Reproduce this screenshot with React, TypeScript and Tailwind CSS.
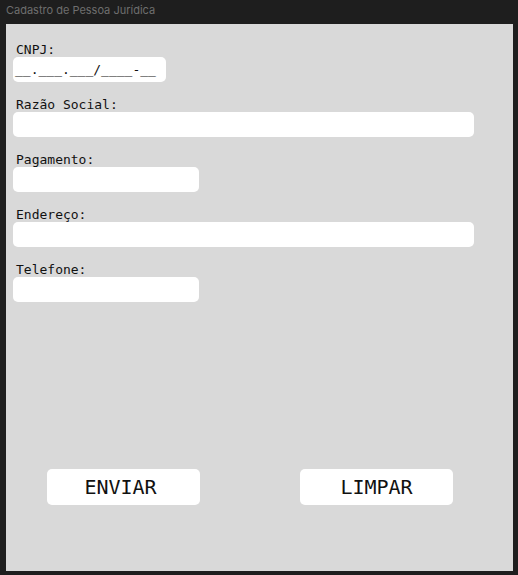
import React from "react";

const mono = { fontFamily: '"DejaVu Sans Mono", "Liberation Mono", monospace' };

function Field({ label, width, placeholder }: { label: string; width: string; placeholder?: string }) {
  return (
    <div className="flex flex-col">
      <label className="text-[13px] leading-[15px] text-[#111] pl-[3px]">{label}</label>
      <div className={`${width} h-[25px] bg-white rounded-[5px] flex items-center pl-[2px] text-[13px] text-[#111]`}>
        {placeholder}
      </div>
    </div>
  );
}

export default function App() {
  return (
    <div className="w-[518px] h-[575px] bg-[#1e1e1e] flex flex-col">
      <div
        className="h-[24px] flex items-center pl-[6px] pb-[4px] text-[11px] text-[#6e6e6e]"
        style={{ fontFamily: 'Inter, "Noto Sans", sans-serif' }}
      >
        Cadastro de Pessoa Jurídica
      </div>
      <div className="ml-[6px] mr-[5px] mb-[4px] flex-1 bg-[#d9d9d9] flex flex-col pt-[18px] pl-[7px] pb-[66px]" style={mono}>
        <div className="flex flex-col gap-[15px]">
          <Field label="CNPJ:" width="w-[153px]" placeholder="__.___.___/____-__" />
          <Field label="Razão Social:" width="w-[461px]" />
          <Field label="Pagamento:" width="w-[186px]" />
          <Field label="Endereço:" width="w-[461px]" />
          <Field label="Telefone:" width="w-[186px]" />
        </div>
        <div className="mt-auto flex gap-[100px] pl-[34px]">
          <button className="w-[153px] h-[36px] bg-white rounded-[5px] text-[20px] text-[#111] flex items-center justify-center pr-[6px]">
            ENVIAR
          </button>
          <button className="w-[153px] h-[36px] bg-white rounded-[5px] text-[20px] text-[#111] flex items-center justify-center">
            LIMPAR
          </button>
        </div>
      </div>
    </div>
  );
}
